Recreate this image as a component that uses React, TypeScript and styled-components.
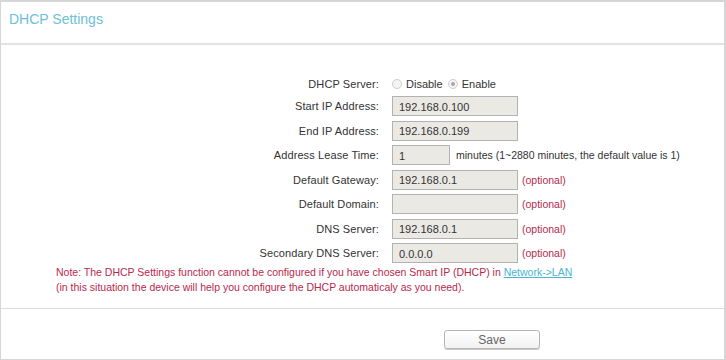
import React from "react";
import styled, { createGlobalStyle } from "styled-components";

const GlobalStyle = createGlobalStyle`
  html, body {
    margin: 0;
    padding: 0;
    background: #fff;
  }
  body {
    font-family: "Liberation Sans", Arial, sans-serif;
  }
`;

const Page = styled.div`
  box-sizing: border-box;
  width: 726px;
  height: 360px;
  border: 1px solid #d6d6d6;
  border-top-width: 2px;
  border-right-width: 2px;
  display: flex;
  flex-direction: column;
  background: #fff;
`;

const Header = styled.div`
  height: 43px;
  flex-shrink: 0;
  border-bottom: 2px solid #e2e2e2;
  display: flex;
  align-items: center;
  padding-left: 8px;
  padding-bottom: 7px;
  box-sizing: border-box;
`;

const Title = styled.h1`
  margin: 0;
  font-size: 14px;
  font-weight: normal;
  color: #6ec0d6;
`;

const Body = styled.div`
  flex-shrink: 0;
  padding-top: 29px;
  border-bottom: 1px solid #dcdcdc;
  height: 264px;
  box-sizing: border-box;
`;

const Row = styled.div<{ $h?: number }>`
  display: flex;
  align-items: center;
  height: ${(p) => p.$h ?? 24.5}px;
`;

const Label = styled.div`
  width: 391px;
  flex-shrink: 0;
  padding-right: 13px;
  box-sizing: border-box;
  text-align: right;
  font-size: 11px;
  letter-spacing: 0.1px;
  color: #333;
  white-space: nowrap;
`;

const Input = styled.input<{ $w?: number }>`
  box-sizing: border-box;
  width: ${(p) => p.$w ?? 126}px;
  height: 20px;
  margin: 0;
  padding: 1px 6px 0;
  border: 1px solid #b2b2b2;
  background: #ebe9e3;
  font-family: "Liberation Sans", Arial, sans-serif;
  font-size: 11px;
  color: #333;
  outline: none;
`;

const Hint = styled.span<{ $optional?: boolean }>`
  margin-left: ${(p) => (p.$optional ? 4 : 6)}px;
  font-size: 10.5px;
  color: ${(p) => (p.$optional ? "#b12a4e" : "#333")};
  white-space: nowrap;
`;

const RadioGroup = styled.div`
  display: flex;
  align-items: center;
  font-size: 11px;
  color: #333;
`;

const Radio = styled.span<{ $checked?: boolean }>`
  box-sizing: border-box;
  width: 10px;
  height: 10px;
  border-radius: 50%;
  border: 1px solid #d0d0d0;
  background: #f4f4f4;
  margin-right: 4px;
  margin-left: ${(p) => (p.$checked ? 5 : 0)}px;
  display: flex;
  align-items: center;
  justify-content: center;
  &::after {
    content: "";
    display: ${(p) => (p.$checked ? "block" : "none")};
    width: 4px;
    height: 4px;
    border-radius: 50%;
    background: #a8a8a8;
  }
`;

const Note = styled.p`
  margin: -1px 0 0 55px;
  font-size: 10.5px;
  line-height: 15px;
  color: #b8284d;
`;

const Link = styled.a`
  color: #4ab4cf;
  text-decoration: underline;
`;

const Footer = styled.div`
  flex: 1;
  display: flex;
  align-items: flex-start;
  justify-content: center;
  padding-top: 21px;
  padding-left: 259px;
  box-sizing: border-box;
`;

const SaveButton = styled.button`
  box-sizing: border-box;
  width: 96px;
  height: 19px;
  border: 1px solid #b6b6b6;
  border-radius: 3px;
  background: linear-gradient(#ffffff, #f2f2f2);
  box-shadow: 0 1px 0 #c8c8c8;
  font-family: "Liberation Sans", Arial, sans-serif;
  font-size: 12px;
  color: #666;
  padding: 0;
  cursor: pointer;
`;

const fields = [
  { label: "Start IP Address:", value: "192.168.0.100" },
  { label: "End IP Address:", value: "192.168.0.199" },
];

const optionalFields = [
  { label: "Default Gateway:", value: "192.168.0.1" },
  { label: "Default Domain:", value: "" },
  { label: "DNS Server:", value: "192.168.0.1" },
  { label: "Secondary DNS Server:", value: "0.0.0.0" },
];

export default function App() {
  return (
    <>
      <GlobalStyle />
      <Page>
        <Header>
          <Title>DHCP Settings</Title>
        </Header>
        <Body>
          <Row $h={20}>
            <Label>DHCP Server:</Label>
            <RadioGroup>
              <Radio />
              Disable
              <Radio $checked />
              Enable
            </RadioGroup>
          </Row>
          {fields.map((f) => (
            <Row key={f.label}>
              <Label>{f.label}</Label>
              <Input defaultValue={f.value} />
            </Row>
          ))}
          <Row>
            <Label>Address Lease Time:</Label>
            <Input $w={58} defaultValue="1" />
            <Hint>minutes (1~2880 minutes, the default value is 1)</Hint>
          </Row>
          {optionalFields.map((f) => (
            <Row key={f.label}>
              <Label>{f.label}</Label>
              <Input defaultValue={f.value} />
              <Hint $optional>(optional)</Hint>
            </Row>
          ))}
          <Note>
            Note: The DHCP Settings function cannot be configured if you have
            chosen Smart IP (DHCP) in <Link href="#">Network-&gt;LAN</Link>
            <br />
            (in this situation the device will help you configure the DHCP
            automaticaly as you need).
          </Note>
        </Body>
        <Footer>
          <SaveButton>Save</SaveButton>
        </Footer>
      </Page>
    </>
  );
}
